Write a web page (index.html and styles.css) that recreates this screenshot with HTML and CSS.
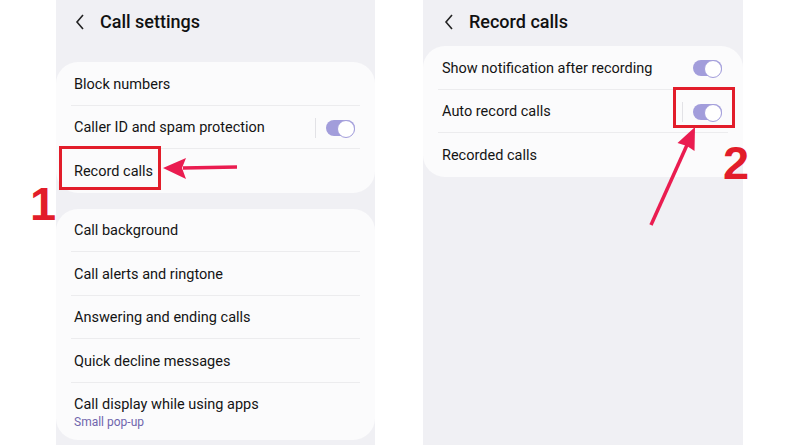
FILE: index.html
```html
<!DOCTYPE html>
<html lang="en">
<head>
    <meta charset="UTF-8">
    <meta name="viewport" content="width=device-width, initial-scale=1.0">
    <title>Record calls</title>
    <link rel="stylesheet" href="styles.css">
</head>
<body>
    <div class="page">
        <!-- left screen: call settings -->
        <div class="phone phone-left">
            <div class="header">
                <svg class="back" width="10" height="16" viewBox="0 0 10 16"><path d="M8 1 L2 8 L8 15" fill="none" stroke="#222" stroke-width="1.6"/></svg>
                <span class="title">Call settings</span>
            </div>
            <div class="card card-first">
                <div class="row">Block numbers</div>
                <div class="row">
                    <span>Caller ID and spam protection</span>
                    <span class="switch-wrap"><span class="vline"></span><span class="switch"></span></span>
                </div>
                <div class="row">Record calls</div>
            </div>
            <div class="card card-second">
                <div class="row">Call background</div>
                <div class="row">Call alerts and ringtone</div>
                <div class="row">Answering and ending calls</div>
                <div class="row">Quick decline messages</div>
                <div class="row row-tall">
                    <span>Call display while using apps</span>
                    <small class="sub">Small pop-up</small>
                </div>
            </div>
        </div>

        <!-- right screen: record calls -->
        <div class="phone phone-right">
            <div class="header">
                <svg class="back" width="10" height="16" viewBox="0 0 10 16"><path d="M8 1 L2 8 L8 15" fill="none" stroke="#222" stroke-width="1.6"/></svg>
                <span class="title">Record calls</span>
            </div>
            <div class="card card-tight">
                <div class="row">
                    <span>Show notification after recording</span>
                    <span class="switch-wrap"><span class="switch"></span></span>
                </div>
                <div class="row">
                    <span>Auto record calls</span>
                    <span class="switch-wrap"><span class="vline"></span><span class="switch"></span></span>
                </div>
                <div class="row">Recorded calls</div>
            </div>
        </div>

        <!-- annotations over the screenshots -->
        <div class="mark mark-one"></div>
        <div class="mark mark-two"></div>
        <span class="step step-one">1</span>
        <span class="step step-two">2</span>
        <svg class="arrows" width="800" height="445" viewBox="0 0 800 445">
            <line x1="237" y1="167" x2="183" y2="168" stroke="#ea1c50" stroke-width="3.5"/>
            <polygon points="163,168 186,158 182,168 186,179" fill="#ea1c50"/>
            <line x1="651" y1="225" x2="687" y2="145" stroke="#ea1c50" stroke-width="3.5"/>
            <polygon points="695,127 694.5,151 687,146 677.5,143" fill="#ea1c50"/>
        </svg>
    </div>
</body>
</html>
```

FILE: styles.css
```css
* {
    box-sizing: border-box;
}
body {
    margin: 0;
    background: #fff;
    font-family: Roboto, "Noto Sans", Arial, sans-serif;
    color: #141414;
}
.page {
    position: relative;
    width: 800px;
    height: 445px;
    display: flex;
    gap: 48px;
    padding-left: 56px;
    overflow: hidden;
}
.phone {
    background: #f0f0f4;
    height: 445px;
}
.phone-left {
    width: 319px;
}
.phone-right {
    width: 320px;
}
.header {
    height: 42px;
    display: flex;
    align-items: center;
    padding-left: 19px;
    padding-top: 1px;
}
.phone-right .header {
    padding-left: 21px;
}
.back {
    margin-right: 15px;
}
.title {
    font-size: 18px;
    font-weight: 500;
    color: #111;
}
.card {
    background: #fbfbfc;
    border-radius: 22px;
    padding: 0 15px;
}
.card-first {
    margin-top: 20px;
}
.card-second {
    margin-top: 16px;
}
.card-tight {
    margin-top: 4px;
}
.row {
    height: 43.5px;
    display: flex;
    align-items: center;
    justify-content: space-between;
    padding-left: 3px;
    padding-top: 2px;
    font-size: 14.5px;
    border-bottom: 1px solid #ececee;
}
.phone-right .row {
    padding-left: 4px;
}
.row:last-child {
    border-bottom: none;
}
.row-tall {
    height: 57px;
    flex-direction: column;
    align-items: flex-start;
    justify-content: flex-start;
    padding-top: 13px;
}
.sub {
    font-size: 12px;
    color: #7066ad;
    margin-top: 2px;
}
.switch-wrap {
    display: flex;
    align-items: center;
    gap: 10px;
    padding-right: 5px;
}
.phone-right .switch-wrap {
    padding-right: 6px;
}
.vline {
    width: 1px;
    height: 20px;
    background: #e2e2e6;
}
.switch {
    position: relative;
    width: 29px;
    height: 16px;
    border-radius: 8px;
    background: #a29ddb;
}
.switch::after {
    content: "";
    position: absolute;
    right: 0;
    top: 0;
    width: 16px;
    height: 16px;
    border-radius: 50%;
    background: #fff;
    border: 1.3px solid #a29ddb;
}
.mark {
    position: absolute;
    border: 3px solid #e21d2a;
}
.mark-one {
    left: 59px;
    top: 146px;
    width: 102px;
    height: 44px;
}
.mark-two {
    left: 673px;
    top: 87px;
    width: 62px;
    height: 41px;
}
.step {
    position: absolute;
    font-family: "Liberation Sans", Arial, sans-serif;
    font-weight: bold;
    font-size: 47px;
    line-height: 1;
    color: #e21d2a;
}
.step-one {
    left: 30px;
    top: 180px;
}
.step-two {
    left: 723px;
    top: 139px;
}
.arrows {
    position: absolute;
    left: 0;
    top: 0;
}
```
